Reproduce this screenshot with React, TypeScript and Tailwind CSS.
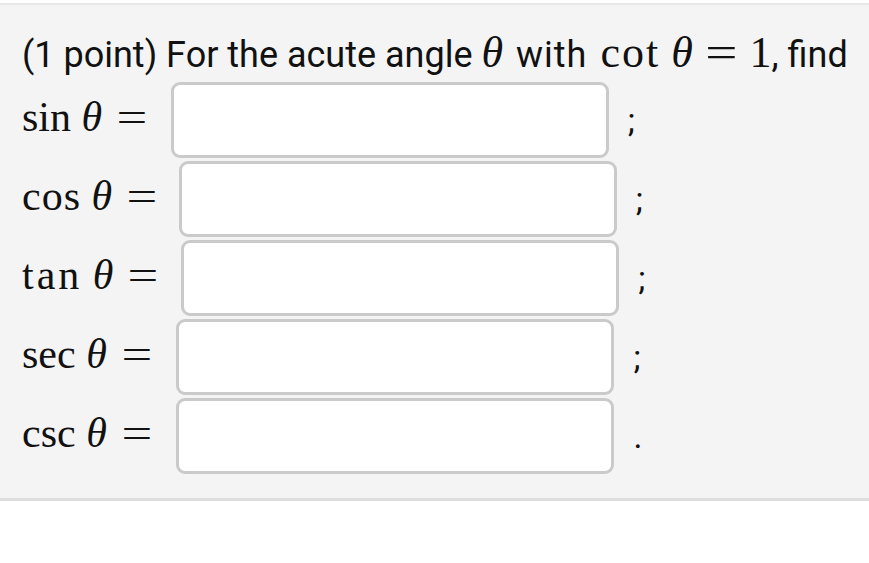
const sans = "font-['Roboto','Liberation_Sans',sans-serif]";
const serif = "font-['Liberation_Serif','Times_New_Roman',serif]";

const rows = [
  { fn: "sin", track: "", gap: "ml-[27px]", end: ";" },
  { fn: "cos", track: "tracking-[1px]", gap: "ml-[25px]", end: ";" },
  { fn: "tan", track: "tracking-[3px]", gap: "ml-[26px]", end: ";" },
  { fn: "sec", track: "", gap: "ml-[28px]", end: ";" },
  { fn: "csc", track: "", gap: "ml-[28px]", end: "." },
];

function Theta() {
  return <span className="italic">θ</span>;
}

function Eq({ className }: { className: string }) {
  return <span className={`inline-block scale-x-[1.3] ${className}`}>=</span>;
}

export default function App() {
  return (
    <div className="min-h-screen bg-white pt-[3px]">
      <div className="border-t-2 border-b-[3px] border-t-[#e7e7e7] border-b-[#dedede] bg-[#f4f4f4] pb-[24px] pl-[22px] pt-[24px]">
        <p className={`${sans} text-[36px] leading-[48px] text-[#111]`}>
          (1 point) For the acute angle{" "}
          <span className={`${serif} mr-[4px] text-[44px]`}>
            <Theta />
          </span>{" "}
          <span className="tracking-[1px]">with</span>{" "}
          <span className={`${serif} ml-[4px] text-[44px]`}>
            <span className="tracking-[2px]">cot</span> <Theta />
            <Eq className="ml-[16px] mr-[16px]" />1
          </span>
          , find
        </p>

        <div className="mt-[3px] flex flex-col gap-[3px]">
          {rows.map((r) => (
            <div key={r.fn} className="flex items-center">
              <span className={`${serif} -mt-[6px] text-[42px] leading-none text-[#111]`}>
                <span className={r.track}>{r.fn}</span> <Theta />
                <Eq className="ml-[18px]" />
              </span>
              <div
                className={`${r.gap} h-[76px] w-[438px] rounded-[9px] border-[3px] border-[#cacaca] bg-white`}
              />
              <span className={`${sans} ml-[19px] text-[34px] text-[#111]`}>{r.end}</span>
            </div>
          ))}
        </div>
      </div>
    </div>
  );
}
